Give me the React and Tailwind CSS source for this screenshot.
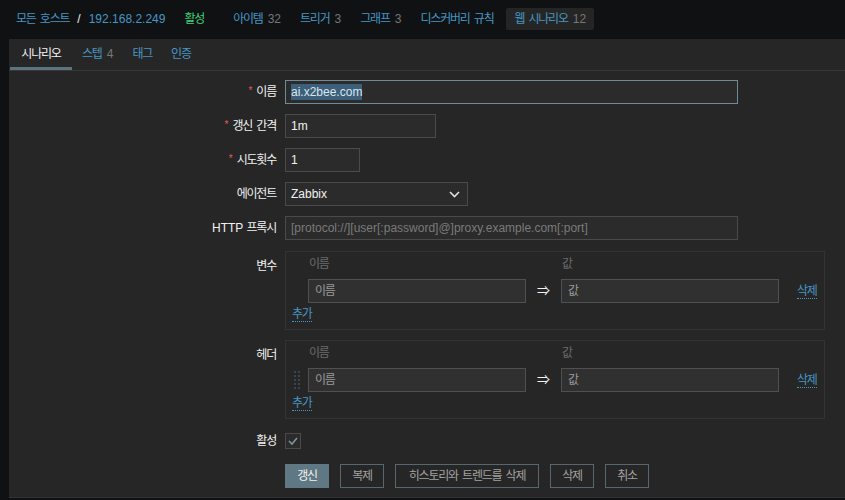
import React from "react";

const font = { fontFamily: '"Liberation Sans", "Noto Sans CJK KR", sans-serif' };

function K({ children, className = "" }) {
  return <span className={"tracking-[-1.2px] [word-spacing:2px] " + className}>{children}</span>;
}

function Label({ children, req }) {
  return (
    <div className="w-[276px] shrink-0 text-right pr-[9px] text-[#f2f2f2]">
      {req && <span className="text-[#e45959] mr-[4px] text-[10px] relative -top-[2px]">*</span>}
      {typeof children === "string" ? <K>{children}</K> : children}
    </div>
  );
}

function Row({ label, req, children, className = "" }) {
  return (
    <div className={"flex items-center " + className}>
      <Label req={req}>{label}</Label>
      {children}
    </div>
  );
}

function Input({ w, value, placeholder, focus }) {
  return (
    <div
      className={
        "h-[24px] flex items-center px-[5px] bg-[#2b2b2b] border " +
        (focus ? "border-[#6e8b99] " : "border-[#4a4a4a] ") +
        w
      }
    >
      {value !== undefined ? (
        focus ? (
          <span className="bg-[#3d5f7a] text-[#d8e6f0] leading-[16px]">{value}</span>
        ) : (
          <span className="text-[#f2f2f2]">{value}</span>
        )
      ) : (
        <span className="text-[#7a7a7a]">{placeholder}</span>
      )}
    </div>
  );
}

function Link({ children }) {
  return (
    <span className="text-[#4796c4] border-b border-dotted border-[#4796c4] leading-[13px] inline-block">
      <K>{children}</K>
    </span>
  );
}

function PairTable({ drag }) {
  return (
    <div className="w-[540px] border border-[#333] pt-[5px] pb-[6px]">
      <div className="flex text-[#6b6b6b] pl-[23px] h-[14px] items-center">
        <div className="w-[253px]"><K>이름</K></div>
        <div><K>값</K></div>
      </div>
      <div className="flex items-center mt-[8px] h-[24px]">
        <div className="w-[22px] flex justify-center">
          {drag && (
            <div className="grid grid-cols-2 gap-x-[2px] gap-y-[2px]">
              {Array.from({ length: 10 }).map((_, i) => (
                <div key={i} className="w-[2px] h-[2px] bg-[#3a444b]" />
              ))}
            </div>
          )}
        </div>
        <div className="w-[218px] h-[24px] bg-[#303030] border border-[#505050] flex items-center px-[6px] text-[#9a9a9a]">
          <K>이름</K>
        </div>
        <div className="w-[35px] text-center text-[#f2f2f2] text-[13px]">⇒</div>
        <div className="w-[218px] h-[24px] bg-[#303030] border border-[#505050] flex items-center px-[6px] text-[#9a9a9a]">
          <K>값</K>
        </div>
        <div className="ml-[18px]">
          <Link>삭제</Link>
        </div>
      </div>
      <div className="pl-[6px] mt-[4px] h-[16px] flex items-center">
        <Link>추가</Link>
      </div>
    </div>
  );
}

function Btn({ children, primary, w }) {
  return (
    <div
      className={
        "h-[24px] flex items-center justify-center border " +
        (primary
          ? "bg-[#5f7884] border-[#5f7884] text-[#f2f2f2] "
          : "border-[#56686f] text-[#a2a2a2] ") +
        w
      }
    >
      <K>{children}</K>
    </div>
  );
}

export default function App() {
  return (
    <div className="w-[845px] h-[500px] bg-[#0f1113] text-[12px] overflow-hidden" style={font}>
      {/* top nav */}
      <div className="h-[39px] flex items-center pl-[16px] pb-[1px]">
        <K className="text-[#4796c4]">모든 호스트</K>
        <span className="text-[#f2f2f2] ml-[8px] mr-[8px]">/</span>
        <span className="text-[#4796c4]">192.168.2.249</span>
        <K className="text-[#3fd37d] ml-[19px]">활성</K>
        <K className="text-[#4796c4] ml-[29px]">아이템</K>
        <span className="text-[#777] ml-[5px]">32</span>
        <K className="text-[#4796c4] ml-[19px]">트리거</K>
        <span className="text-[#777] ml-[5px]">3</span>
        <K className="text-[#4796c4] ml-[19px]">그래프</K>
        <span className="text-[#777] ml-[5px]">3</span>
        <K className="text-[#4796c4] ml-[19px]">디스커버리 규칙</K>
        <span className="ml-[13px] h-[22px] px-[8px] bg-[#252525] rounded-[2px] flex items-center">
          <K className="text-[#4796c4]">웹 시나리오</K>
          <span className="text-[#777] ml-[5px]">12</span>
        </span>
      </div>
      {/* panel */}
      <div className="ml-[9px] h-[459px] bg-[#262626] border-b border-[#333]">
        <div className="h-[32px] flex items-end border-b border-[#383838]">
          <div className="w-[62px] ml-[1px] h-[32px] flex items-center justify-center text-[#f2f2f2] border-b-[3px] border-[#5d7480] pt-[3px]">
            <K>시나리오</K>
          </div>
          <div className="h-[32px] flex items-center ml-[10px] pb-[1px]">
            <K className="text-[#4796c4]">스텝</K>
            <span className="text-[#777] ml-[5px]">4</span>
          </div>
          <div className="h-[32px] flex items-center ml-[19px] text-[#4796c4] pb-[1px]"><K>태그</K></div>
          <div className="h-[32px] flex items-center ml-[19px] text-[#4796c4] pb-[1px]"><K>인증</K></div>
        </div>
        <div className="pt-[9px] flex flex-col">
          <Row label="이름" req>
            <Input w="w-[453px]" value="ai.x2bee.com" focus />
          </Row>
          <Row label="갱신 간격" req className="mt-[10px]">
            <Input w="w-[151px]" value="1m" />
          </Row>
          <Row label="시도횟수" req className="mt-[10px]">
            <Input w="w-[75px]" value="1" />
          </Row>
          <Row label="에이전트" className="mt-[10px]">
            <div className="w-[183px] h-[24px] flex items-center justify-between px-[5px] bg-[#2b2b2b] border border-[#4a4a4a] text-[#f2f2f2]">
              <span>Zabbix</span>
              <svg width="11" height="7" viewBox="0 0 11 7" className="mr-[2px]">
                <path d="M1 1l4.5 4.5L10 1" stroke="#e0e0e0" strokeWidth="1.6" fill="none" />
              </svg>
            </div>
          </Row>
          <Row
            label={
              <span>
                HTTP <K>프록시</K>
              </span>
            }
            className="mt-[10px]"
          >
            <Input w="w-[453px]" placeholder="[protocol://][user[:password]@]proxy.example.com[:port]" />
          </Row>
          <div className="flex items-start mt-[11px]">
            <div className="pt-[6px]">
              <Label>변수</Label>
            </div>
            <PairTable />
          </div>
          <div className="flex items-start mt-[10px]">
            <div className="pt-[6px]">
              <Label>헤더</Label>
            </div>
            <PairTable drag />
          </div>
          <Row label="활성" className="mt-[10px] h-[24px]">
            <div className="w-[16px] h-[16px] border border-[#4a4a4a] bg-[#2b2b2b] flex items-center justify-center">
              <svg width="10" height="8" viewBox="0 0 10 8">
                <path d="M1 4l3 3 5-6" stroke="#7d96a3" strokeWidth="1.6" fill="none" />
              </svg>
            </div>
          </Row>
          <div className="flex items-center mt-[11px] pl-[276px] gap-[11px]">
            <Btn primary w="w-[44px]">갱신</Btn>
            <Btn w="w-[44px]">복제</Btn>
            <Btn w="w-[144px]">히스토리와 트렌드를 삭제</Btn>
            <Btn w="w-[44px]">삭제</Btn>
            <Btn w="w-[44px]">취소</Btn>
          </div>
        </div>
      </div>
    </div>
  );
}
